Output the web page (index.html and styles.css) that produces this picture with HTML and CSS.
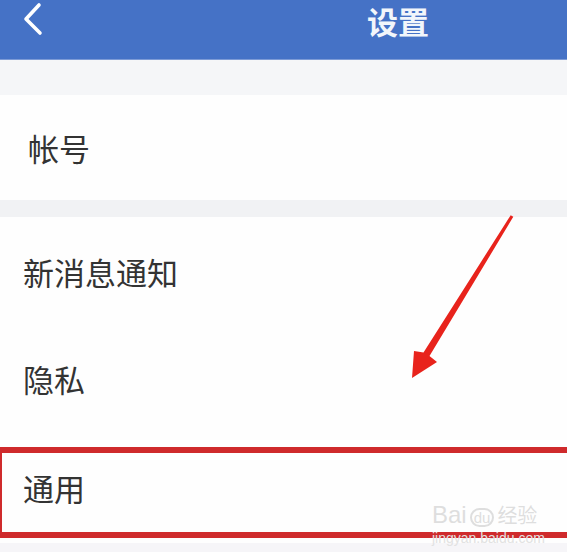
FILE: index.html
```html
<!DOCTYPE html>
<html lang="zh">
<head>
<meta charset="utf-8">
<title>设置</title>
<link rel="stylesheet" href="styles.css">
</head>
<body>
<div class="page">
  <header class="topbar">
    <svg class="back" width="24" height="34" viewBox="0 0 24 34"><polyline points="17,3 4,17 18,31" fill="none" stroke="#fff" stroke-width="3.6" stroke-linecap="round" stroke-linejoin="round"/></svg>
    <h1 class="title">设置</h1>
  </header>
  <div class="gap gap-top"></div>
  <section class="group">
    <div class="row row-account">帐号</div>
  </section>
  <div class="gap gap-mid"></div>
  <section class="group">
    <div class="row row-a">新消息通知</div>
    <div class="row row-b">隐私</div>
    <div class="row row-c">通用</div>
  </section>
  <div class="gap gap-bottom"></div>

  <div class="mark-box"></div>
  <svg class="arrow" width="130" height="180" viewBox="0 0 130 180">
    <polygon points="112.7,5.2 115.3,6.8 31.5,146 39,152 14,168 16,141 25.5,142.4" fill="#e8231c"/>
  </svg>
  <div class="watermark">
    <div class="wm-top"><span class="wm-bai">Bai</span><span class="wm-du">du</span><span class="wm-cn">经验</span></div>
    <div class="wm-url">jingyan.baidu.com</div>
  </div>
</div>
</body>
</html>
```
FILE: styles.css
```css
html, body {
  margin: 0;
  padding: 0;
  background: #f6f5f8;
}
.page {
  position: relative;
  width: 567px;
  height: 552px;
  overflow: hidden;
  font-family: "Noto Sans CJK SC", "Noto Sans", sans-serif;
  color: #333;
}
.topbar {
  height: 60px;
  background: #4572c6;
  border-bottom: 1px solid #7d9bd6;
  box-sizing: border-box;
  display: flex;
  align-items: flex-start;
}
.back {
  flex: none;
  margin-left: 22px;
  margin-top: 2px;
}
.title {
  flex: none;
  margin: 0 0 0 319px;
  padding: 0 2px;
  font-size: 31px;
  font-weight: 700;
  color: #f2f6fb;
  line-height: 42px;
  white-space: nowrap;
}
.gap-top { height: 35px; background: #f5f6f8; }
.gap-mid { height: 17px; background: #f1f2f4; }
.gap-bottom { height: 20px; background: #f6f5f8; }
.group { background: #fefefe; }
.row {
  display: flex;
  align-items: center;
  padding-left: 23px;
  font-size: 31px;
  line-height: 1;
  color: #333;
}
.row-account { height: 105px; padding-left: 28px; }
.row-a { height: 108px; }
.row-b { height: 106px; }
.row-c { height: 112px; }
.mark-box {
  position: absolute;
  left: 0;
  top: 447px;
  width: 580px;
  height: 91px;
  box-sizing: border-box;
  border: 6px solid #cf2a2c;
  border-right: none;
  border-left-width: 2px;
}
.arrow {
  position: absolute;
  left: 398px;
  top: 210px;
}
.watermark {
  position: absolute;
  left: 432px;
  top: 503px;
  color: #dedede;
  font-family: "Liberation Sans", sans-serif;
}
.wm-top {
  display: flex;
  align-items: baseline;
  font-size: 24px;
  line-height: 1;
}
.wm-du {
  font-size: 15px;
  border: 2px solid #dedede;
  border-radius: 12px;
  padding: 0 2px;
  margin: 0 3px;
}
.wm-cn { font-family: "Noto Sans CJK SC", sans-serif; font-size: 20px; }
.wm-url {
  font-size: 14px;
  line-height: 1;
  margin-top: 4px;
  color: #e2e2e2;
}
```
